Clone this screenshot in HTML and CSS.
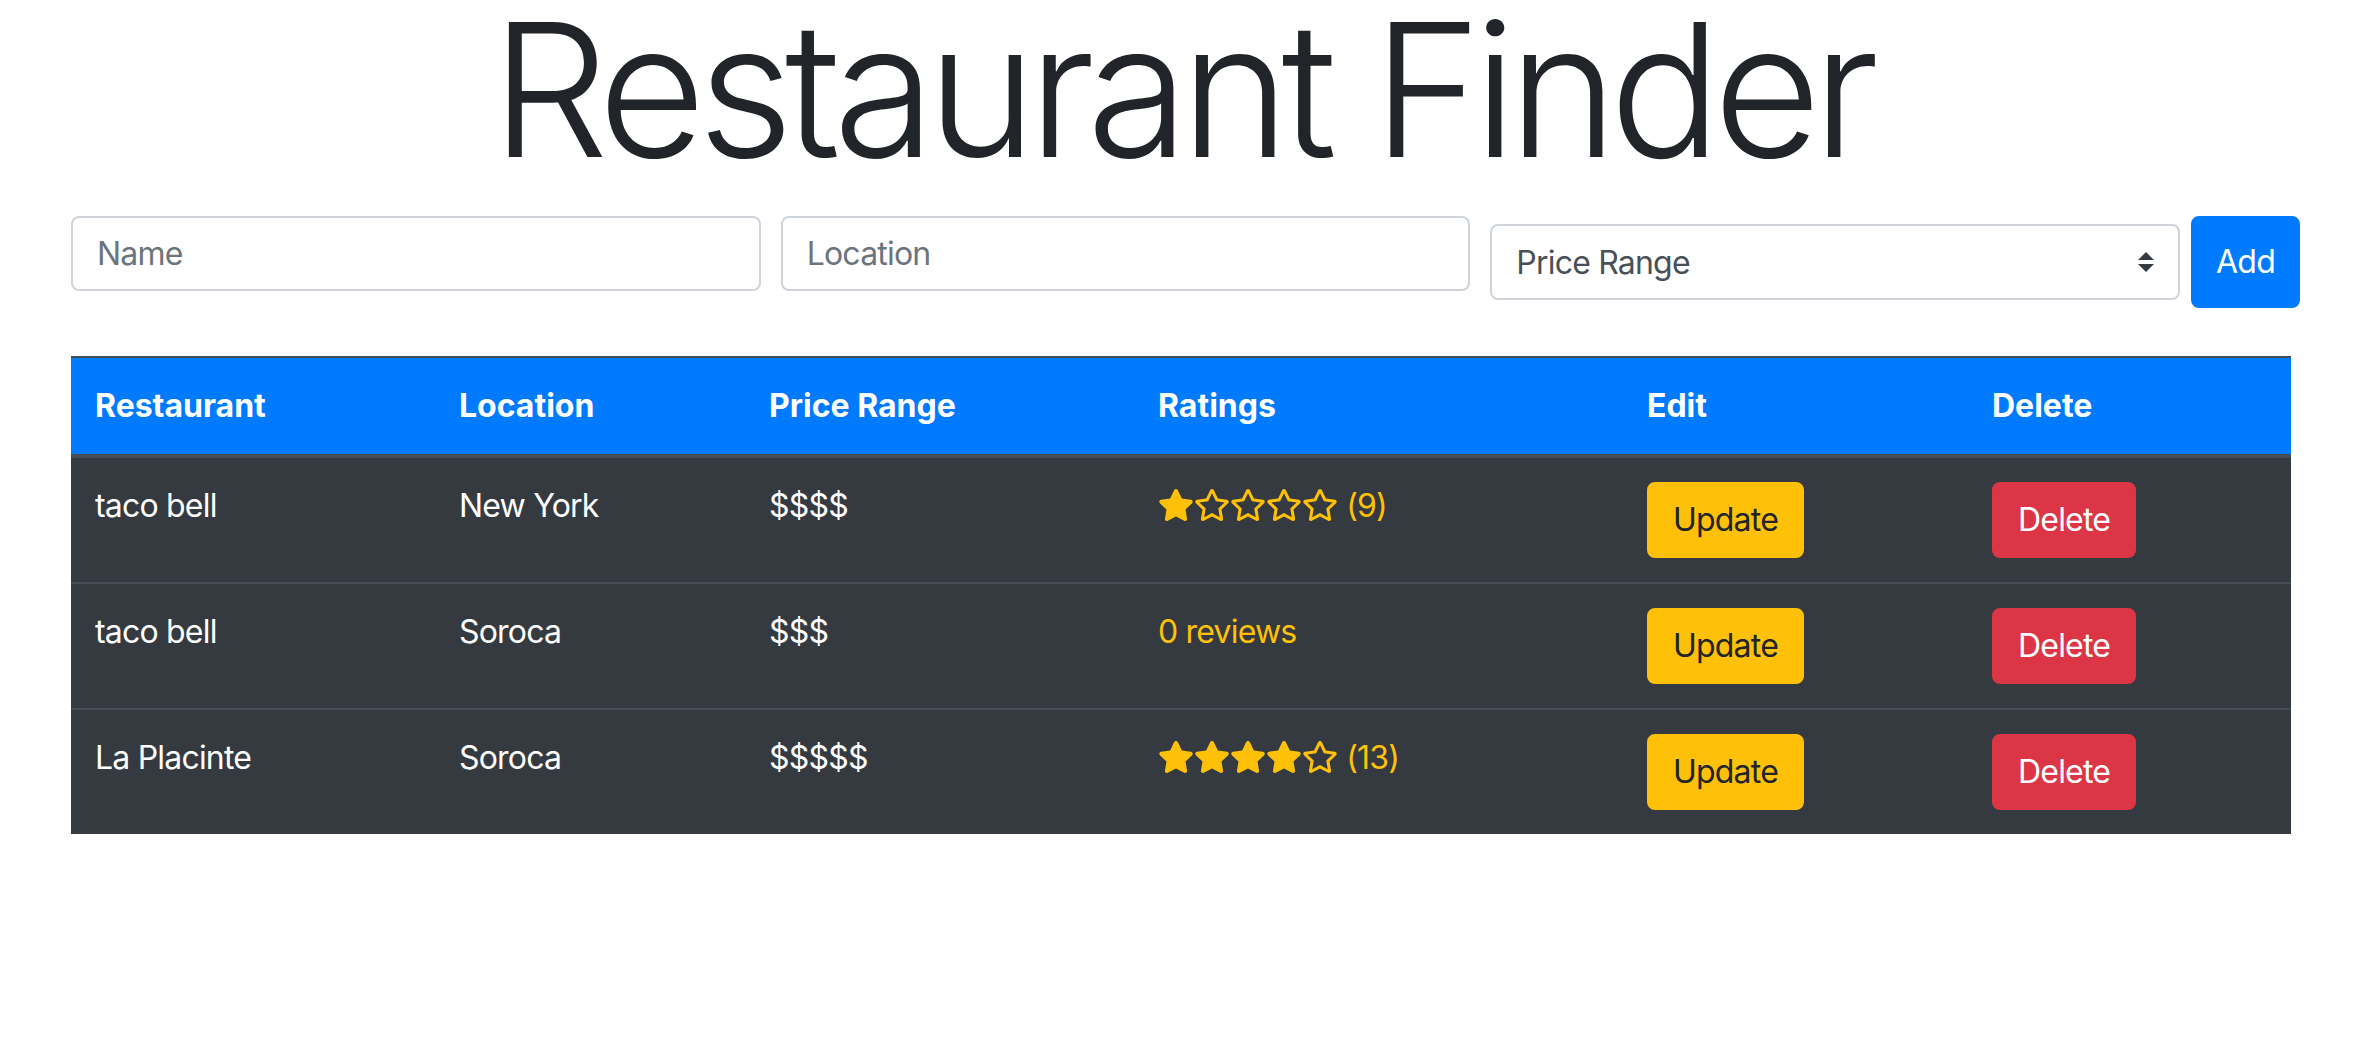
FILE: index.html
```html
<!DOCTYPE html>
<html lang="en">
<head>
<meta charset="utf-8">
<title>Restaurant Finder</title>
<link rel="stylesheet" href="styles.css">
</head>
<body>
<div class="container">
  <h1 class="title">Restaurant Finder</h1>
  <form class="add-form">
    <input class="field" type="text" placeholder="Name">
    <input class="field" type="text" placeholder="Location">
    <div class="select-wrap">
      <select class="field select">
        <option>Price Range</option>
        <option>$</option>
        <option>$$</option>
        <option>$$$</option>
        <option>$$$$</option>
        <option>$$$$$</option>
      </select>
      <svg class="select-arrow" viewBox="0 0 4 5" aria-hidden="true"><path d="M2 0L0 2h4zm0 5L0 3h4z"/></svg>
    </div>
    <button class="btn btn-add" type="button">Add</button>
  </form>

  <table class="rtable">
    <colgroup>
      <col class="c-name">
      <col class="c-loc">
      <col class="c-price">
      <col class="c-rating">
      <col class="c-edit">
      <col class="c-del">
    </colgroup>
    <thead>
      <tr>
        <th>Restaurant</th>
        <th>Location</th>
        <th>Price Range</th>
        <th>Ratings</th>
        <th>Edit</th>
        <th>Delete</th>
      </tr>
    </thead>
    <tbody>
      <tr>
        <td>taco bell</td>
        <td>New York</td>
        <td>$$$$</td>
        <td class="rating"><svg class="star" viewBox="0 0 576 512"><path d="M259.3 17.8L194 150.2 47.9 171.5c-26.2 3.8-36.7 36.1-17.7 54.6l105.7 103-25 145.5c-4.5 26.3 23.2 46 46.4 33.7L288 439.6l130.7 68.7c23.2 12.2 50.9-7.4 46.4-33.7l-25-145.5 105.7-103c19-18.5 8.5-50.8-17.7-54.6L382 150.2 316.7 17.8c-11.7-23.6-45.6-23.9-57.4 0z"/></svg><svg class="star" viewBox="0 0 576 512"><path d="M528.1 171.5L382 150.2 316.7 17.8c-11.7-23.6-45.6-23.9-57.4 0L194 150.2 47.9 171.5c-26.2 3.8-36.7 36.1-17.7 54.6l105.7 103-25 145.5c-4.5 26.3 23.2 46 46.4 33.7L288 439.6l130.7 68.7c23.2 12.2 50.9-7.4 46.4-33.7l-25-145.5 105.7-103c19-18.5 8.5-50.8-17.7-54.6zM388.6 312.3l23.7 138.4L288 385.4l-124.3 65.3 23.7-138.4-100.6-98 139-20.2 62.2-126 62.2 126 139 20.2-100.6 98z"/></svg><svg class="star" viewBox="0 0 576 512"><path d="M528.1 171.5L382 150.2 316.7 17.8c-11.7-23.6-45.6-23.9-57.4 0L194 150.2 47.9 171.5c-26.2 3.8-36.7 36.1-17.7 54.6l105.7 103-25 145.5c-4.5 26.3 23.2 46 46.4 33.7L288 439.6l130.7 68.7c23.2 12.2 50.9-7.4 46.4-33.7l-25-145.5 105.7-103c19-18.5 8.5-50.8-17.7-54.6zM388.6 312.3l23.7 138.4L288 385.4l-124.3 65.3 23.7-138.4-100.6-98 139-20.2 62.2-126 62.2 126 139 20.2-100.6 98z"/></svg><svg class="star" viewBox="0 0 576 512"><path d="M528.1 171.5L382 150.2 316.7 17.8c-11.7-23.6-45.6-23.9-57.4 0L194 150.2 47.9 171.5c-26.2 3.8-36.7 36.1-17.7 54.6l105.7 103-25 145.5c-4.5 26.3 23.2 46 46.4 33.7L288 439.6l130.7 68.7c23.2 12.2 50.9-7.4 46.4-33.7l-25-145.5 105.7-103c19-18.5 8.5-50.8-17.7-54.6zM388.6 312.3l23.7 138.4L288 385.4l-124.3 65.3 23.7-138.4-100.6-98 139-20.2 62.2-126 62.2 126 139 20.2-100.6 98z"/></svg><svg class="star" viewBox="0 0 576 512"><path d="M528.1 171.5L382 150.2 316.7 17.8c-11.7-23.6-45.6-23.9-57.4 0L194 150.2 47.9 171.5c-26.2 3.8-36.7 36.1-17.7 54.6l105.7 103-25 145.5c-4.5 26.3 23.2 46 46.4 33.7L288 439.6l130.7 68.7c23.2 12.2 50.9-7.4 46.4-33.7l-25-145.5 105.7-103c19-18.5 8.5-50.8-17.7-54.6zM388.6 312.3l23.7 138.4L288 385.4l-124.3 65.3 23.7-138.4-100.6-98 139-20.2 62.2-126 62.2 126 139 20.2-100.6 98z"/></svg> (9)</td>
        <td><button class="btn btn-update" type="button">Update</button></td>
        <td><button class="btn btn-delete" type="button">Delete</button></td>
      </tr>
      <tr>
        <td>taco bell</td>
        <td>Soroca</td>
        <td>$$$</td>
        <td class="rating">0 reviews</td>
        <td><button class="btn btn-update" type="button">Update</button></td>
        <td><button class="btn btn-delete" type="button">Delete</button></td>
      </tr>
      <tr>
        <td>La Placinte</td>
        <td>Soroca</td>
        <td>$$$$$</td>
        <td class="rating"><svg class="star" viewBox="0 0 576 512"><path d="M259.3 17.8L194 150.2 47.9 171.5c-26.2 3.8-36.7 36.1-17.7 54.6l105.7 103-25 145.5c-4.5 26.3 23.2 46 46.4 33.7L288 439.6l130.7 68.7c23.2 12.2 50.9-7.4 46.4-33.7l-25-145.5 105.7-103c19-18.5 8.5-50.8-17.7-54.6L382 150.2 316.7 17.8c-11.7-23.6-45.6-23.9-57.4 0z"/></svg><svg class="star" viewBox="0 0 576 512"><path d="M259.3 17.8L194 150.2 47.9 171.5c-26.2 3.8-36.7 36.1-17.7 54.6l105.7 103-25 145.5c-4.5 26.3 23.2 46 46.4 33.7L288 439.6l130.7 68.7c23.2 12.2 50.9-7.4 46.4-33.7l-25-145.5 105.7-103c19-18.5 8.5-50.8-17.7-54.6L382 150.2 316.7 17.8c-11.7-23.6-45.6-23.9-57.4 0z"/></svg><svg class="star" viewBox="0 0 576 512"><path d="M259.3 17.8L194 150.2 47.9 171.5c-26.2 3.8-36.7 36.1-17.7 54.6l105.7 103-25 145.5c-4.5 26.3 23.2 46 46.4 33.7L288 439.6l130.7 68.7c23.2 12.2 50.9-7.4 46.4-33.7l-25-145.5 105.7-103c19-18.5 8.5-50.8-17.7-54.6L382 150.2 316.7 17.8c-11.7-23.6-45.6-23.9-57.4 0z"/></svg><svg class="star" viewBox="0 0 576 512"><path d="M259.3 17.8L194 150.2 47.9 171.5c-26.2 3.8-36.7 36.1-17.7 54.6l105.7 103-25 145.5c-4.5 26.3 23.2 46 46.4 33.7L288 439.6l130.7 68.7c23.2 12.2 50.9-7.4 46.4-33.7l-25-145.5 105.7-103c19-18.5 8.5-50.8-17.7-54.6L382 150.2 316.7 17.8c-11.7-23.6-45.6-23.9-57.4 0z"/></svg><svg class="star" viewBox="0 0 576 512"><path d="M528.1 171.5L382 150.2 316.7 17.8c-11.7-23.6-45.6-23.9-57.4 0L194 150.2 47.9 171.5c-26.2 3.8-36.7 36.1-17.7 54.6l105.7 103-25 145.5c-4.5 26.3 23.2 46 46.4 33.7L288 439.6l130.7 68.7c23.2 12.2 50.9-7.4 46.4-33.7l-25-145.5 105.7-103c19-18.5 8.5-50.8-17.7-54.6zM388.6 312.3l23.7 138.4L288 385.4l-124.3 65.3 23.7-138.4-100.6-98 139-20.2 62.2-126 62.2 126 139 20.2-100.6 98z"/></svg> (13)</td>
        <td><button class="btn btn-update" type="button">Update</button></td>
        <td><button class="btn btn-delete" type="button">Delete</button></td>
      </tr>
    </tbody>
  </table>
</div>
</body>
</html>
```

FILE: styles.css
```css
*, *::before, *::after {
  box-sizing: border-box;
}

html, body {
  margin: 0;
  padding: 0;
  background: #ffffff;
}

body {
  font-family: "Inter", "Roboto", "Noto Sans", sans-serif;
  font-size: 32px;
  line-height: 48px;
  color: #212529;
}

.container {
  width: 2220px;
  margin: 0 auto;
}

.title {
  margin: 0 0 37px;
  font-size: 186px;
  font-weight: 300;
  line-height: 179px;
  letter-spacing: -8.4px;
  text-align: center;
  color: #212529;
}

.add-form {
  display: grid;
  grid-template-columns: minmax(0, 1fr) minmax(0, 1fr) minmax(0, 1fr) 100px;
  column-gap: 20px;
  align-items: start;
  margin: 0 -9px 0 0;
}

.field {
  width: 100%;
  min-width: 0;
  height: 75px;
  padding: 0 24px;
  border: 2px solid #ced4da;
  border-radius: 8px;
  background: #ffffff;
  font-family: inherit;
  font-size: 32px;
  letter-spacing: -0.8px;
  color: #495057;
  outline: none;
}

.field::placeholder {
  color: #6c757d;
  opacity: 1;
}

.select-wrap {
  position: relative;
  margin-top: 8px;
  display: flex;
}

.select {
  height: 76px;
  -webkit-appearance: none;
  appearance: none;
  padding-right: 64px;
}

.select-arrow {
  position: absolute;
  right: 26px;
  top: 28px;
  width: 16px;
  height: 20px;
  fill: #343a40;
  pointer-events: none;
}

.btn {
  display: inline-block;
  font-family: inherit;
  font-size: 32px;
  line-height: 48px;
  letter-spacing: -0.8px;
  padding: 12px 24px;
  border: 2px solid transparent;
  border-radius: 8px;
  cursor: pointer;
  vertical-align: top;
}

.btn-add {
  width: 109px;
  height: 92px;
  padding: 0;
  margin-left: -9px;
  text-align: center;
  background: #007bff;
  border-color: #007bff;
  color: #ffffff;
}

.btn-update {
  background: #ffc107;
  border-color: #ffc107;
  color: #212529;
}

.btn-delete {
  background: #dc3545;
  border-color: #dc3545;
  color: #ffffff;
}

.rtable {
  width: 2220px;
  margin-top: 48px;
  table-layout: fixed;
  border-collapse: separate;
  border-spacing: 0;
  background: #343a40;
  color: #ffffff;
}

.c-name { width: 364px; }
.c-loc { width: 310px; }
.c-price { width: 389px; }
.c-rating { width: 489px; }
.c-edit { width: 345px; }
.c-del { width: 323px; }

.rtable th {
  background: #007bff;
  border-top: 2px solid #454d55;
  border-bottom: 4px solid #454d55;
  padding: 24px;
  text-align: left;
  font-weight: 700;
  line-height: 48px;
  vertical-align: bottom;
}

.rtable td {
  padding: 24px;
  line-height: 48px;
  letter-spacing: -0.8px;
  vertical-align: top;
}

.rating {
  color: #ffc107;
}

.rtable tbody tr + tr td {
  border-top: 2px solid #454d55;
}

.star {
  width: 36px;
  height: 32px;
  fill: #ffc107;
  vertical-align: -4px;
}
```
